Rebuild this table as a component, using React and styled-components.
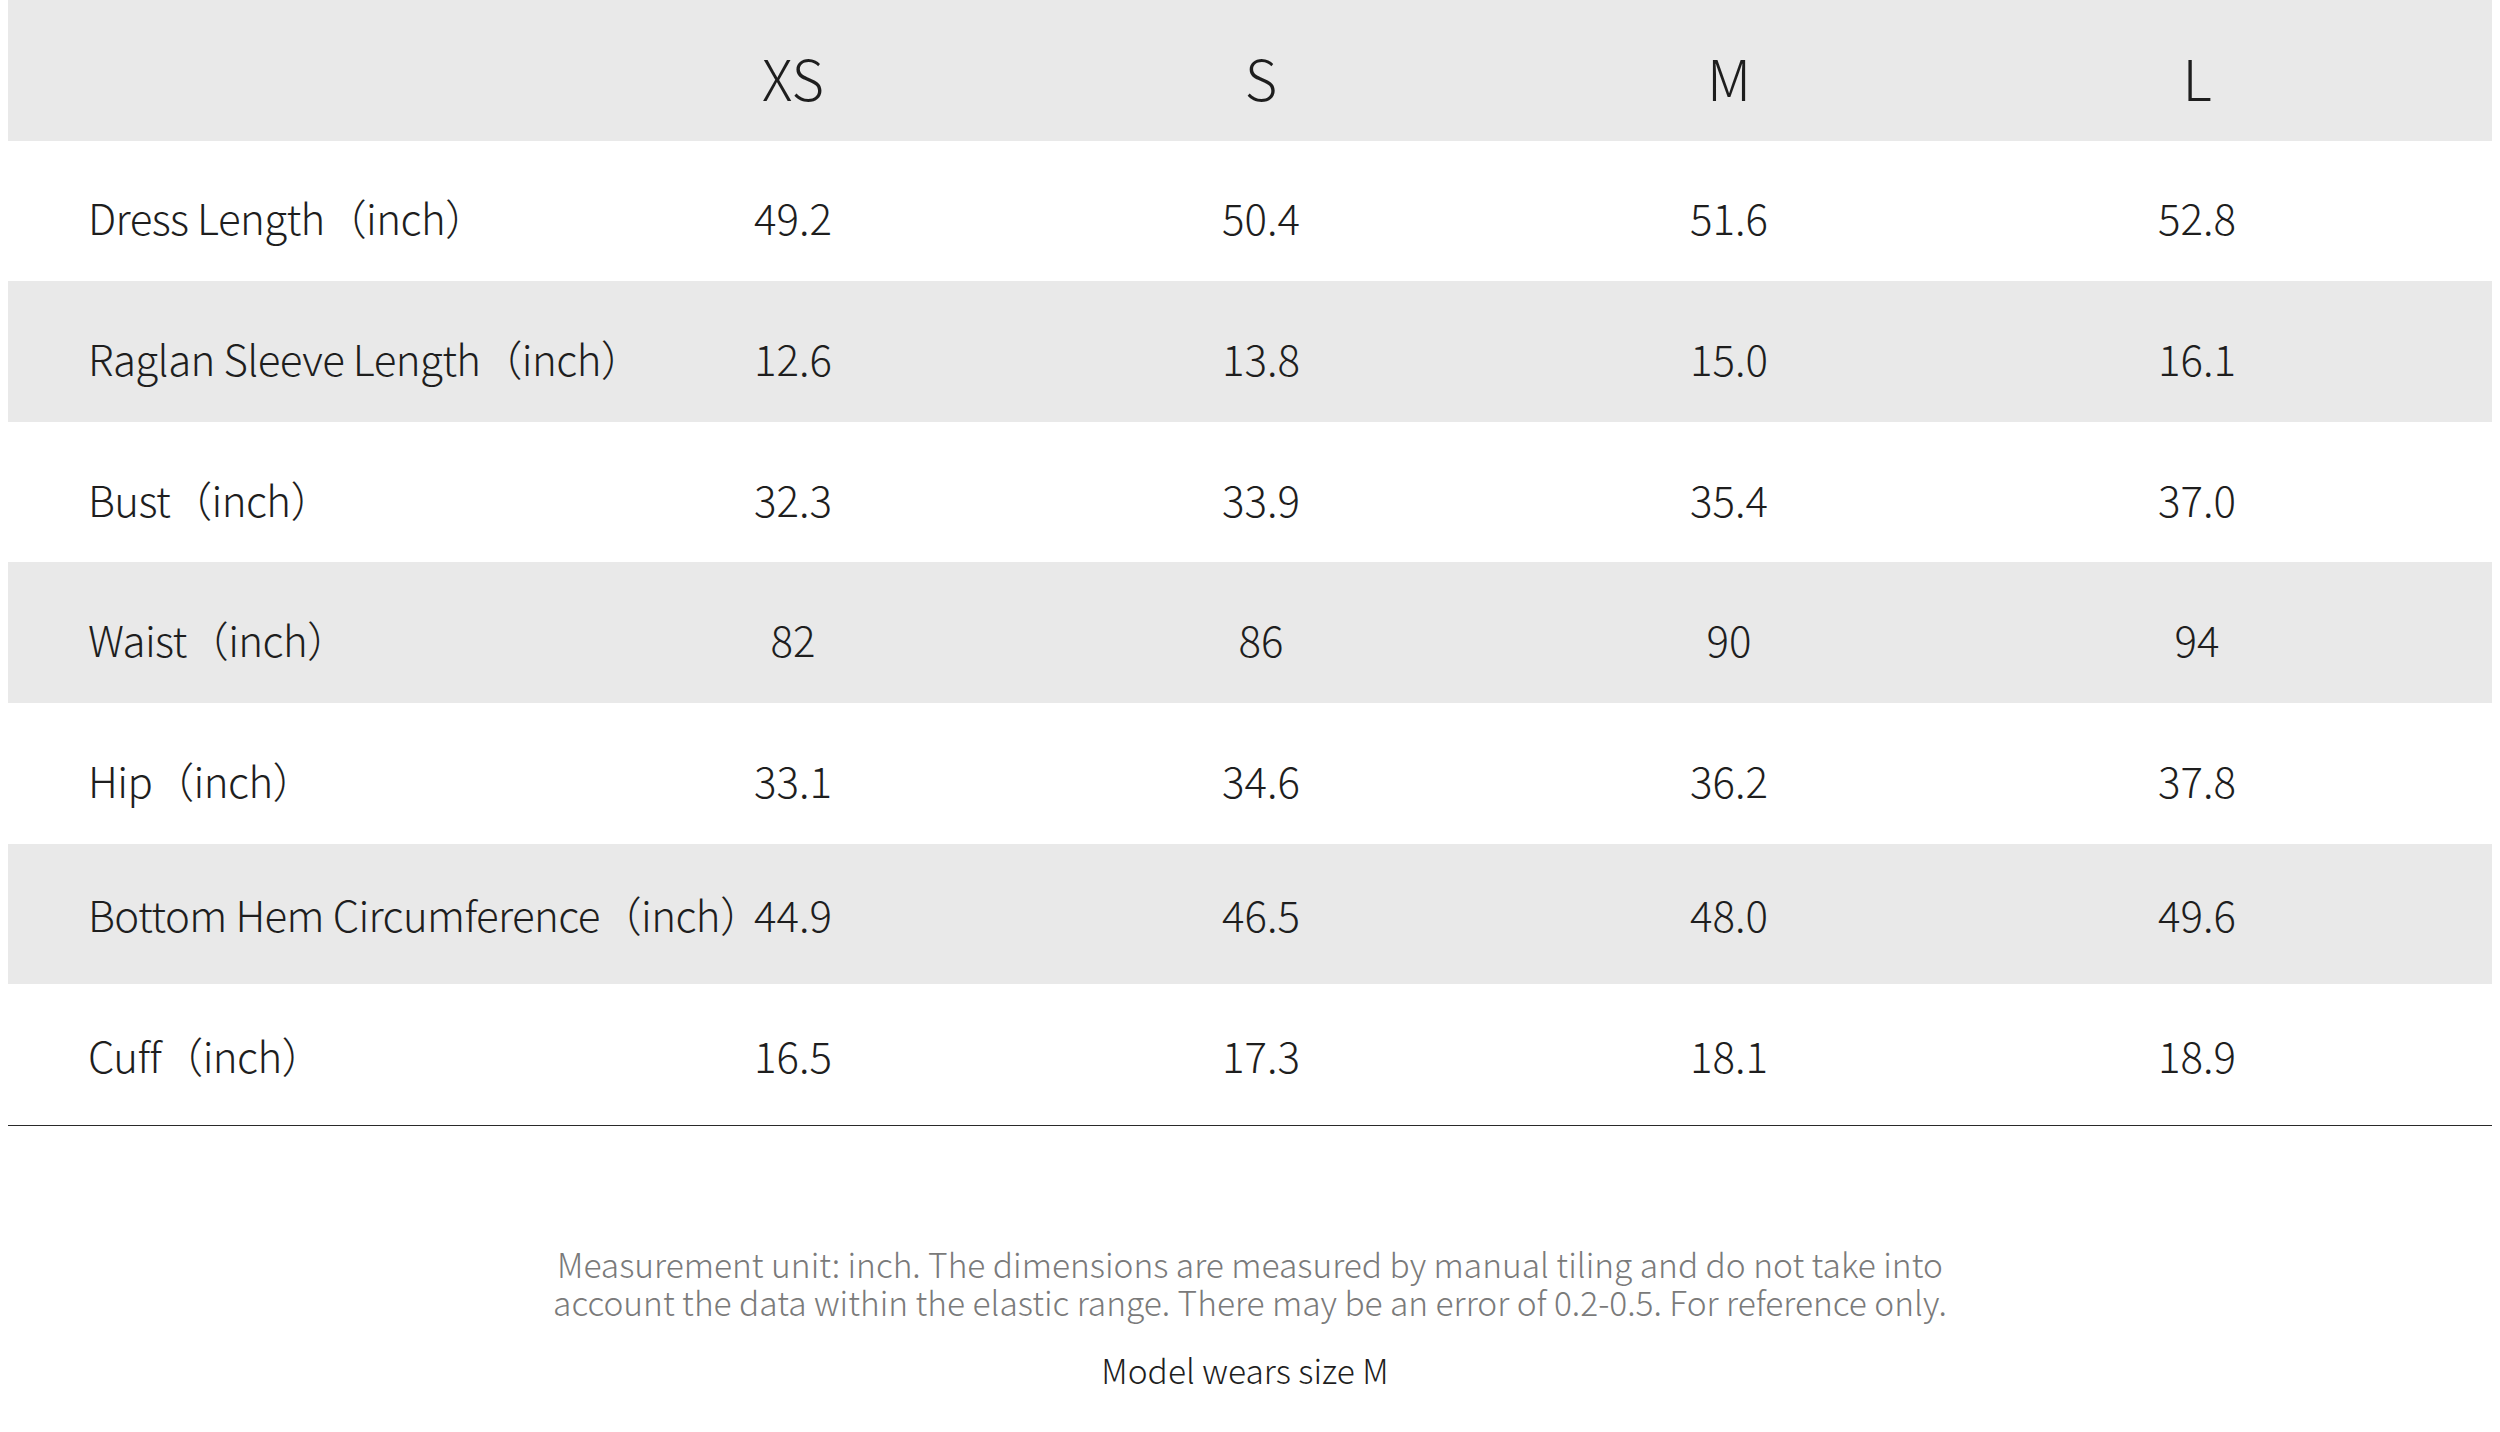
import React from 'react';
import styled, { createGlobalStyle } from 'styled-components';

var GlobalStyle = createGlobalStyle`
  html, body {
    margin: 0;
    padding: 0;
    background: #ffffff;
  }
  body {
    font-family: "Noto Sans CJK SC", "Source Han Sans", "Noto Sans", sans-serif;
    font-weight: 300;
    color: #1e1e1e;
  }
`;

var Page = styled.div`
  padding: 0 8px;
`;

var Table = styled.div`
  display: grid;
  grid-template-columns: 551px repeat(4, 468px) 1fr;
  border-bottom: 1.5px solid #2a2a2a;
`;

var Row = styled.div`
  display: contents;
`;

var Cell = styled.div`
  height: 140.6px;
  display: flex;
  align-items: center;
  justify-content: center;
  padding-top: ${(p) => p.shift || 0}px;
  box-sizing: border-box;
  background: ${(p) => (p.shaded ? '#e9e9e9' : '#ffffff')};
  font-size: ${(p) => (p.head ? '56px' : '42px')};
  white-space: nowrap;
`;

// the long labels run past their column, so they sit above the next cell
var LabelCell = styled(Cell)`
  position: relative;
  z-index: 1;
  justify-content: flex-start;
  padding-left: 80px;
  letter-spacing: -0.6px;
`;

var Notes = styled.div`
  margin-top: 119px;
  text-align: center;
`;

var Disclaimer = styled.p`
  margin: 0 auto;
  width: 1420px;
  font-size: 33.5px;
  line-height: 38px;
  color: #7a7a7a;
`;

var ModelSize = styled.p`
  margin: 30px 0 0;
  padding-right: 10px;
  font-size: 33.5px;
  line-height: 38px;
  color: #1e1e1e;
`;

var sizes = ['XS', 'S', 'M', 'L'];

var rows = [
  ['Dress Length（inch）', '49.2', '50.4', '51.6', '52.8'],
  ['Raglan Sleeve Length（inch）', '12.6', '13.8', '15.0', '16.1'],
  ['Bust（inch）', '32.3', '33.9', '35.4', '37.0'],
  ['Waist（inch）', '82', '86', '90', '94'],
  ['Hip（inch）', '33.1', '34.6', '36.2', '37.8'],
  ['Bottom Hem Circumference（inch）', '44.9', '46.5', '48.0', '49.6'],
  ['Cuff（inch）', '16.5', '17.3', '18.1', '18.9'],
];

var App = () => {
  return (
    <Page>
      <GlobalStyle />
      <Table>
        <Row>
          <LabelCell shaded head shift={12}></LabelCell>
          {sizes.map((s) => (
            <Cell shaded head shift={12} key={s}>{s}</Cell>
          ))}
          <Cell shaded head></Cell>
        </Row>
        {rows.map((r, i) => {
          var shaded = i % 2 === 1;
          var shift = i < 5 ? 12 : 0;
          return (
            <Row key={r[0]}>
              <LabelCell shaded={shaded} shift={shift}>{r[0]}</LabelCell>
              {r.slice(1).map((v, j) => (
                <Cell shaded={shaded} shift={shift} key={j}>{v}</Cell>
              ))}
              <Cell shaded={shaded}></Cell>
            </Row>
          );
        })}
      </Table>
      <Notes>
        <Disclaimer>
          Measurement unit: inch. The dimensions are measured by manual tiling and do not take into
          account the data within the elastic range. There may be an error of 0.2-0.5. For reference only.
        </Disclaimer>
        <ModelSize>Model wears size M</ModelSize>
      </Notes>
    </Page>
  );
};

export default App;
